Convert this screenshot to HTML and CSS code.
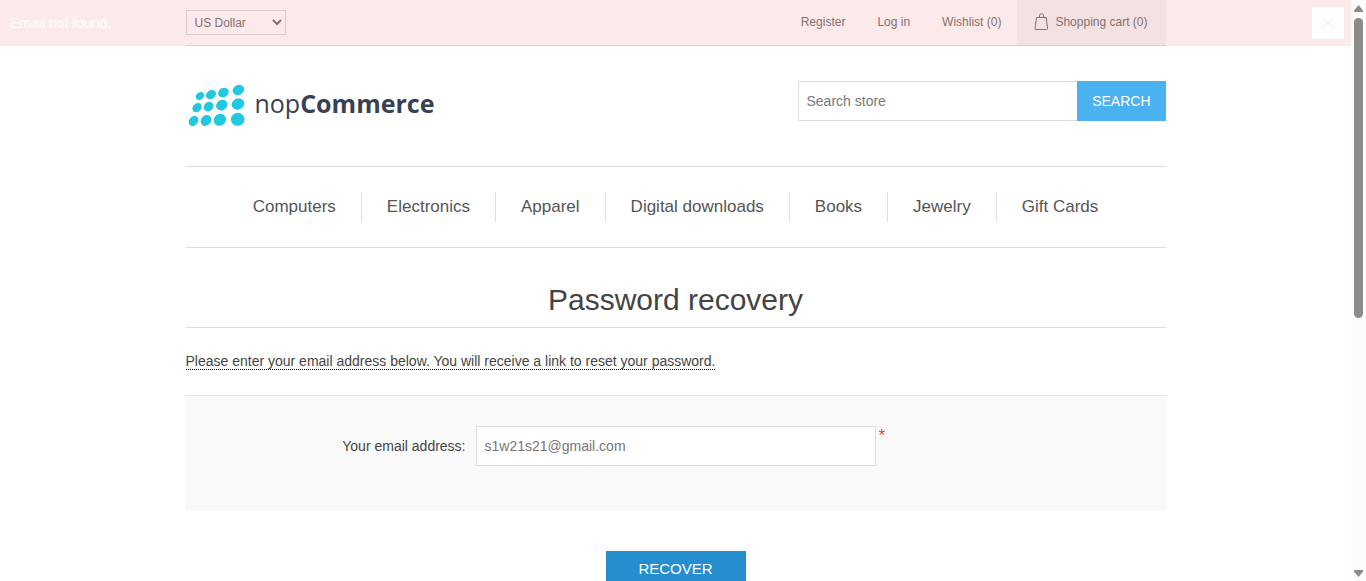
FILE: index.html
```
<!DOCTYPE html>
<html lang="en">
<head>
<meta charset="utf-8">
<title>Password recovery</title>
<link rel="stylesheet" href="styles.css">
</head>
<body>
<div class="notification" role="alert">
  <p class="notification-text">Email not found.</p>
  <button class="notification-close" type="button" aria-label="Close">
    <svg width="12" height="12" viewBox="0 0 12 12"><path d="M0 0L12 12M12 0L0 12" stroke="#e8e8e8" fill="none"/></svg>
  </button>
</div>
<div class="page">
  <header>
    <div class="top-bar">
      <select class="currency" aria-label="Currency"><option>US Dollar</option><option>Euro</option></select>
      <nav class="account">
        <a href="#">Register</a>
        <a href="#">Log in</a>
        <a href="#">Wishlist (0)</a>
        <a class="cart" href="#">
          <svg width="15" height="18" viewBox="0 0 15 18" fill="none" stroke="#777"><path d="M2.5 4.5H12.2L13.6 15.5Q13.7 16.5 12.6 16.5H2Q0.9 16.5 1 15.5ZM5.5 4.5V2.5Q5.5 1 6.5 1H8.2Q9.5 1 9.5 2.5V4.5"/></svg>
          Shopping cart (0)
        </a>
      </nav>
    </div>
    <div class="brand-row">
      <a class="logo" href="#">
        <svg width="60" height="46" viewBox="0 0 60 46" fill="#22c8e0">
          <ellipse cx="14" cy="13" rx="4.6" ry="3.7" transform="rotate(-40 14 13)"/>
          <ellipse cx="25" cy="11.5" rx="5.4" ry="4.2" transform="rotate(-35 25 11.5)"/>
          <ellipse cx="37.4" cy="9.5" rx="5.6" ry="4.5" transform="rotate(-30 37.4 9.5)"/>
          <ellipse cx="52.4" cy="7" rx="6" ry="4.9" transform="rotate(-25 52.4 7)"/>
          <ellipse cx="11" cy="24.6" rx="5.1" ry="4.1" transform="rotate(-45 11 24.6)"/>
          <ellipse cx="22.6" cy="23.6" rx="5.2" ry="4.5" transform="rotate(-40 22.6 23.6)"/>
          <ellipse cx="35.7" cy="22.2" rx="5.9" ry="5.1" transform="rotate(-35 35.7 22.2)"/>
          <ellipse cx="52" cy="21" rx="6.4" ry="5.6" transform="rotate(-25 52 21)"/>
          <ellipse cx="7.5" cy="38" rx="5.5" ry="4.3" transform="rotate(-55 7.5 38)"/>
          <ellipse cx="20" cy="37.4" rx="5.9" ry="4.9" transform="rotate(-50 20 37.4)"/>
          <ellipse cx="33.9" cy="36.8" rx="6.4" ry="5.8" transform="rotate(-40 33.9 36.8)"/>
          <ellipse cx="51.7" cy="36.3" rx="6.8" ry="6.5"/>
        </svg>
        <span>nop<b>Commerce</b></span>
      </a>
      <form class="search">
        <input type="text" placeholder="Search store" aria-label="Search store">
        <button type="button">SEARCH</button>
      </form>
    </div>
    <nav class="menu">
      <a href="#">Computers</a>
      <a href="#">Electronics</a>
      <a href="#">Apparel</a>
      <a href="#">Digital downloads</a>
      <a href="#">Books</a>
      <a href="#">Jewelry</a>
      <a href="#">Gift Cards</a>
    </nav>
  </header>
  <main>
    <h1>Password recovery</h1>
    <form>
      <p class="hint"><span>Please enter your email address below. You will receive a link to reset your password.</span></p>
      <div class="fields">
        <label for="email">Your email address:</label>
        <input id="email" type="email" value="s1w21s21@gmail.com">
        <span class="required">*</span>
      </div>
      <button class="recover" type="button">RECOVER</button>
    </form>
  </main>
</div>
<div class="scrollbar" aria-hidden="true">
  <svg width="9" height="7" viewBox="0 0 9 7"><path d="M4.5 0L9 5.5V7H0V5.5Z" fill="#8b8b8b"/></svg>
  <div class="track"><div class="thumb"></div></div>
  <svg width="9" height="7" viewBox="0 0 9 7"><path d="M4.5 7L9 1.5V0H0V1.5Z" fill="#8b8b8b"/></svg>
</div>
</body>
</html>
```
FILE: styles.css
```
* {
  box-sizing: border-box;
}

body {
  margin: 0;
  height: 100vh;
  overflow: hidden;
  padding-right: 15px;
  background: #fff;
  color: #444;
  font: 14px/20px "Liberation Sans", Arial, sans-serif;
}

a {
  color: inherit;
  text-decoration: none;
}

input,
button,
select {
  margin: 0;
  font: inherit;
  border-radius: 0;
}

.page {
  max-width: 980px;
  margin: 0 auto;
}

.notification {
  position: absolute;
  top: 0;
  left: 0;
  right: 15px;
  z-index: 2;
  height: 46px;
  padding: 0 7px 0 10px;
  display: flex;
  align-items: center;
  justify-content: space-between;
  background: rgba(228, 75, 75, 0.12);
  color: #fff;
}

.notification-text {
  margin: 0;
}

.notification-close {
  width: 32px;
  height: 32px;
  padding: 0;
  display: grid;
  place-items: center;
  border: 0;
  background: #fff;
}

.top-bar {
  height: 46px;
  display: flex;
  align-items: center;
  justify-content: space-between;
  border-bottom: 1px solid #ddd;
  font-size: 12px;
  color: #777;
}

.currency {
  width: 100px;
  height: 25px;
  padding: 0 4px;
  border: 1px solid #ddd;
  background: #fff;
  color: #777;
}

.account {
  height: 100%;
  display: flex;
}

.account a {
  height: 100%;
  padding: 0 16px 2px;
  display: flex;
  align-items: center;
}

.account .cart {
  gap: 6px;
  padding: 0 18px 2px 17px;
  background: #f6f6f6;
}

.brand-row {
  padding: 35px 0 37px;
  display: flex;
  align-items: flex-start;
  justify-content: space-between;
}

.logo {
  padding-top: 2px;
  display: flex;
  align-items: flex-start;
  gap: 9px;
  color: #374151;
  font: 25px/40px "Open Sans", "Noto Sans", sans-serif;
}

.logo b {
  font-weight: 700;
}

.search {
  width: 368px;
  height: 40px;
  display: flex;
}

.search input {
  flex: 1;
  min-width: 0;
  padding: 0 8px;
  border: 1px solid #ddd;
  border-right: 0;
}

.search input::placeholder {
  color: #777;
}

.search button {
  padding: 0 15px;
  border: 0;
  background: #4ab2f1;
  color: #fff;
}

.menu {
  padding: 25px 0;
  display: flex;
  justify-content: center;
  border-top: 1px solid #ddd;
  border-bottom: 1px solid #ddd;
  color: #555;
  font-size: 17px;
  line-height: 30px;
}

.menu a {
  padding: 0 25px;
}

.menu a + a {
  border-left: 1px solid #ddd;
}

h1 {
  margin: 30px 0 23px;
  padding-bottom: 5px;
  border-bottom: 1px solid #ddd;
  font-size: 30px;
  line-height: 44px;
  font-weight: 400;
  text-align: center;
}

.hint {
  margin: 0 0 24px;
}

.hint span {
  border-bottom: 1px dotted #000;
}

.fields {
  padding: 30px 0 45px;
  display: grid;
  grid-template-columns: 280px 400px 1fr;
  border-top: 1px solid #e6e6e6;
  background: #f9f9f9;
  column-gap: 10px;
}

.fields label {
  line-height: 40px;
  text-align: right;
}

.fields input {
  height: 40px;
  padding: 0 8px;
  border: 1px solid #ddd;
  background: #fff;
  color: #777;
}

.required {
  margin-left: -7px;
  color: #e4434b;
  font-size: 17px;
}

.recover {
  width: 140px;
  height: 36px;
  margin: 40px auto;
  display: block;
  border: 0;
  background: #248ece;
  color: #fff;
  font-size: 15px;
}

.scrollbar {
  position: fixed;
  top: 0;
  right: 0;
  bottom: 0;
  width: 15px;
  padding: 5px 0 4px;
  display: flex;
  flex-direction: column;
  align-items: center;
  gap: 6px;
  background: #fcfcfc;
}

.track {
  flex: 1;
}

.thumb {
  width: 9px;
  height: 55%;
  border-radius: 5px;
  background: #8b8b8b;
}
```
